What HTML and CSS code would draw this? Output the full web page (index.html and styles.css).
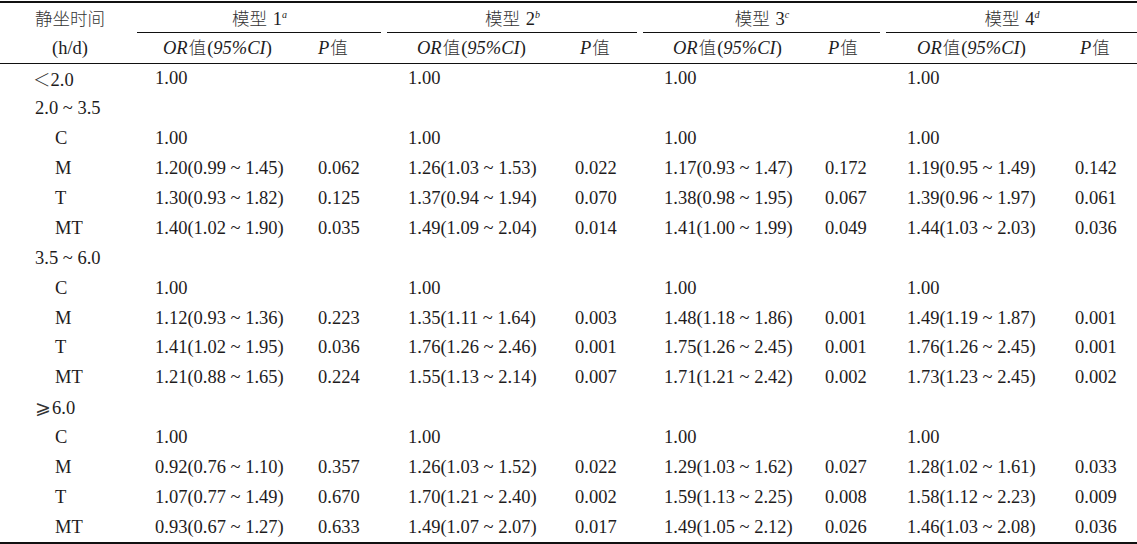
FILE: index.html
```html
<!DOCTYPE html>
<html lang="zh">
<head>
<meta charset="utf-8">
<title>静坐时间与模型</title>
<link rel="stylesheet" href="styles.css">
</head>
<body>
<table class="grid">
  <colgroup>
    <col class="c-label">
    <col class="c-or1"><col class="c-p1">
    <col class="c-or2"><col class="c-p2">
    <col class="c-or3"><col class="c-p3">
    <col class="c-or4"><col class="c-p4">
  </colgroup>
  <thead>
    <tr class="hrow1">
      <th rowspan="2" class="stub"><span class="zh">静坐时间</span><br>(h/d)</th>
      <th colspan="2" class="grp"><div class="grp-line"><span class="zh">模型</span> 1<sup>a</sup></div></th>
      <th colspan="2" class="grp"><div class="grp-line"><span class="zh">模型</span> 2<sup>b</sup></div></th>
      <th colspan="2" class="grp"><div class="grp-line"><span class="zh">模型</span> 3<sup>c</sup></div></th>
      <th colspan="2" class="grp last"><div class="grp-line"><span class="zh">模型</span> 4<sup>d</sup></div></th>
    </tr>
    <tr class="hrow2">
      <th><i>OR</i><span class="zh">值</span>(<i>95%CI</i>)</th>
      <th><i>P</i><span class="zh">值</span></th>
      <th><i>OR</i><span class="zh">值</span>(<i>95%CI</i>)</th>
      <th><i>P</i><span class="zh">值</span></th>
      <th><i>OR</i><span class="zh">值</span>(<i>95%CI</i>)</th>
      <th><i>P</i><span class="zh">值</span></th>
      <th><i>OR</i><span class="zh">值</span>(<i>95%CI</i>)</th>
      <th><i>P</i><span class="zh">值</span></th>
    </tr>
  </thead>
  <tbody>
    <tr><td class="grp-label"><span class="zh">＜</span>2.0</td><td>1.00</td><td></td><td>1.00</td><td></td><td>1.00</td><td></td><td>1.00</td><td></td></tr>
    <tr><td class="grp-label">2.0 ~ 3.5</td><td></td><td></td><td></td><td></td><td></td><td></td><td></td><td></td></tr>
    <tr><td class="sub">C</td><td>1.00</td><td></td><td>1.00</td><td></td><td>1.00</td><td></td><td>1.00</td><td></td></tr>
    <tr><td class="sub">M</td><td>1.20(0.99 ~ 1.45)</td><td>0.062</td><td>1.26(1.03 ~ 1.53)</td><td>0.022</td><td>1.17(0.93 ~ 1.47)</td><td>0.172</td><td>1.19(0.95 ~ 1.49)</td><td>0.142</td></tr>
    <tr><td class="sub">T</td><td>1.30(0.93 ~ 1.82)</td><td>0.125</td><td>1.37(0.94 ~ 1.94)</td><td>0.070</td><td>1.38(0.98 ~ 1.95)</td><td>0.067</td><td>1.39(0.96 ~ 1.97)</td><td>0.061</td></tr>
    <tr><td class="sub">MT</td><td>1.40(1.02 ~ 1.90)</td><td>0.035</td><td>1.49(1.09 ~ 2.04)</td><td>0.014</td><td>1.41(1.00 ~ 1.99)</td><td>0.049</td><td>1.44(1.03 ~ 2.03)</td><td>0.036</td></tr>
    <tr><td class="grp-label">3.5 ~ 6.0</td><td></td><td></td><td></td><td></td><td></td><td></td><td></td><td></td></tr>
    <tr><td class="sub">C</td><td>1.00</td><td></td><td>1.00</td><td></td><td>1.00</td><td></td><td>1.00</td><td></td></tr>
    <tr><td class="sub">M</td><td>1.12(0.93 ~ 1.36)</td><td>0.223</td><td>1.35(1.11 ~ 1.64)</td><td>0.003</td><td>1.48(1.18 ~ 1.86)</td><td>0.001</td><td>1.49(1.19 ~ 1.87)</td><td>0.001</td></tr>
    <tr><td class="sub">T</td><td>1.41(1.02 ~ 1.95)</td><td>0.036</td><td>1.76(1.26 ~ 2.46)</td><td>0.001</td><td>1.75(1.26 ~ 2.45)</td><td>0.001</td><td>1.76(1.26 ~ 2.45)</td><td>0.001</td></tr>
    <tr><td class="sub">MT</td><td>1.21(0.88 ~ 1.65)</td><td>0.224</td><td>1.55(1.13 ~ 2.14)</td><td>0.007</td><td>1.71(1.21 ~ 2.42)</td><td>0.002</td><td>1.73(1.23 ~ 2.45)</td><td>0.002</td></tr>
    <tr><td class="grp-label"><span class="sym">⩾</span>6.0</td><td></td><td></td><td></td><td></td><td></td><td></td><td></td><td></td></tr>
    <tr><td class="sub">C</td><td>1.00</td><td></td><td>1.00</td><td></td><td>1.00</td><td></td><td>1.00</td><td></td></tr>
    <tr><td class="sub">M</td><td>0.92(0.76 ~ 1.10)</td><td>0.357</td><td>1.26(1.03 ~ 1.52)</td><td>0.022</td><td>1.29(1.03 ~ 1.62)</td><td>0.027</td><td>1.28(1.02 ~ 1.61)</td><td>0.033</td></tr>
    <tr><td class="sub">T</td><td>1.07(0.77 ~ 1.49)</td><td>0.670</td><td>1.70(1.21 ~ 2.40)</td><td>0.002</td><td>1.59(1.13 ~ 2.25)</td><td>0.008</td><td>1.58(1.12 ~ 2.23)</td><td>0.009</td></tr>
    <tr><td class="sub">MT</td><td>0.93(0.67 ~ 1.27)</td><td>0.633</td><td>1.49(1.07 ~ 2.07)</td><td>0.017</td><td>1.49(1.05 ~ 2.12)</td><td>0.026</td><td>1.46(1.03 ~ 2.08)</td><td>0.036</td></tr>
  </tbody>
</table>
</body>
</html>
```
FILE: styles.css
```css
html, body {
  margin: 0;
  padding: 0;
  background: #ffffff;
}

body {
  font-family: "Liberation Serif", "Noto Sans CJK SC", serif;
  font-size: 18.5px;
  color: #1e1c1d;
}

.zh {
  font-family: "Noto Sans CJK SC", sans-serif;
  font-size: 17.5px;
  font-weight: 300;
  color: #333;
  padding: 0 1px;
}

.sym {
  font-family: "DejaVu Sans", "Noto Sans CJK SC", sans-serif;
  font-size: 19px;
  font-weight: 300;
  color: #333;
  padding-right: 1px;
}

.grid {
  width: 1137px;
  table-layout: fixed;
  border-collapse: separate;
  border-spacing: 0;
  margin-top: 1px;
  border-top: 2px solid #111;
  border-bottom: 2px solid #111;
}

.c-label { width: 134px; }
.c-or1 { width: 168px; }
.c-p1 { width: 82px; }
.c-or2 { width: 175px; }
.c-p2 { width: 81px; }
.c-or3 { width: 169px; }
.c-p3 { width: 74px; }
.c-or4 { width: 176px; }
.c-p4 { width: 78px; }

th {
  font-weight: normal;
  padding: 0;
  white-space: nowrap;
}

i {
  font-style: italic;
}

sup {
  font-size: 10px;
  font-style: italic;
  vertical-align: 7px;
  line-height: 0;
}

.stub {
  text-align: center;
  padding-left: 6px;
  line-height: 29px;
  vertical-align: top;
  border-bottom: 1px solid #111;
}

.grp {
  text-align: center;
  height: 29px;
  vertical-align: bottom;
}

.grp-line {
  margin: 0 3px;
  height: 28px;
  line-height: 28px;
  border-bottom: 1px solid #111;
}

.grp.last .grp-line {
  margin-right: 0;
}

.hrow2 th {
  height: 28px;
  line-height: 28px;
  text-align: left;
  border-bottom: 1px solid #111;
}

.hrow2 th:nth-child(1) { padding-left: 29px; }
.hrow2 th:nth-child(3),
.hrow2 th:nth-child(5) { padding-left: 33px; }
.hrow2 th:nth-child(7) { padding-left: 34px; }
.hrow2 th:nth-child(2) { padding-left: 16px; }
.hrow2 th:nth-child(4) { padding-left: 21px; }
.hrow2 th:nth-child(6) { padding-left: 19px; }
.hrow2 th:nth-child(8) { padding-left: 21px; }

tbody td {
  height: 29.9px;
  padding: 0;
  white-space: nowrap;
  vertical-align: middle;
}

tbody td:nth-child(2) { padding-left: 21px; }
tbody td:nth-child(4),
tbody td:nth-child(6),
tbody td:nth-child(8) { padding-left: 24px; }
tbody td:nth-child(3),
tbody td:nth-child(5),
tbody td:nth-child(7),
tbody td:nth-child(9) { padding-left: 16px; }

tbody td.grp-label { padding-left: 35px; }
tbody td.grp-label .zh { margin-left: -2px; padding: 0; }
tbody td.sub { padding-left: 55px; }
```
